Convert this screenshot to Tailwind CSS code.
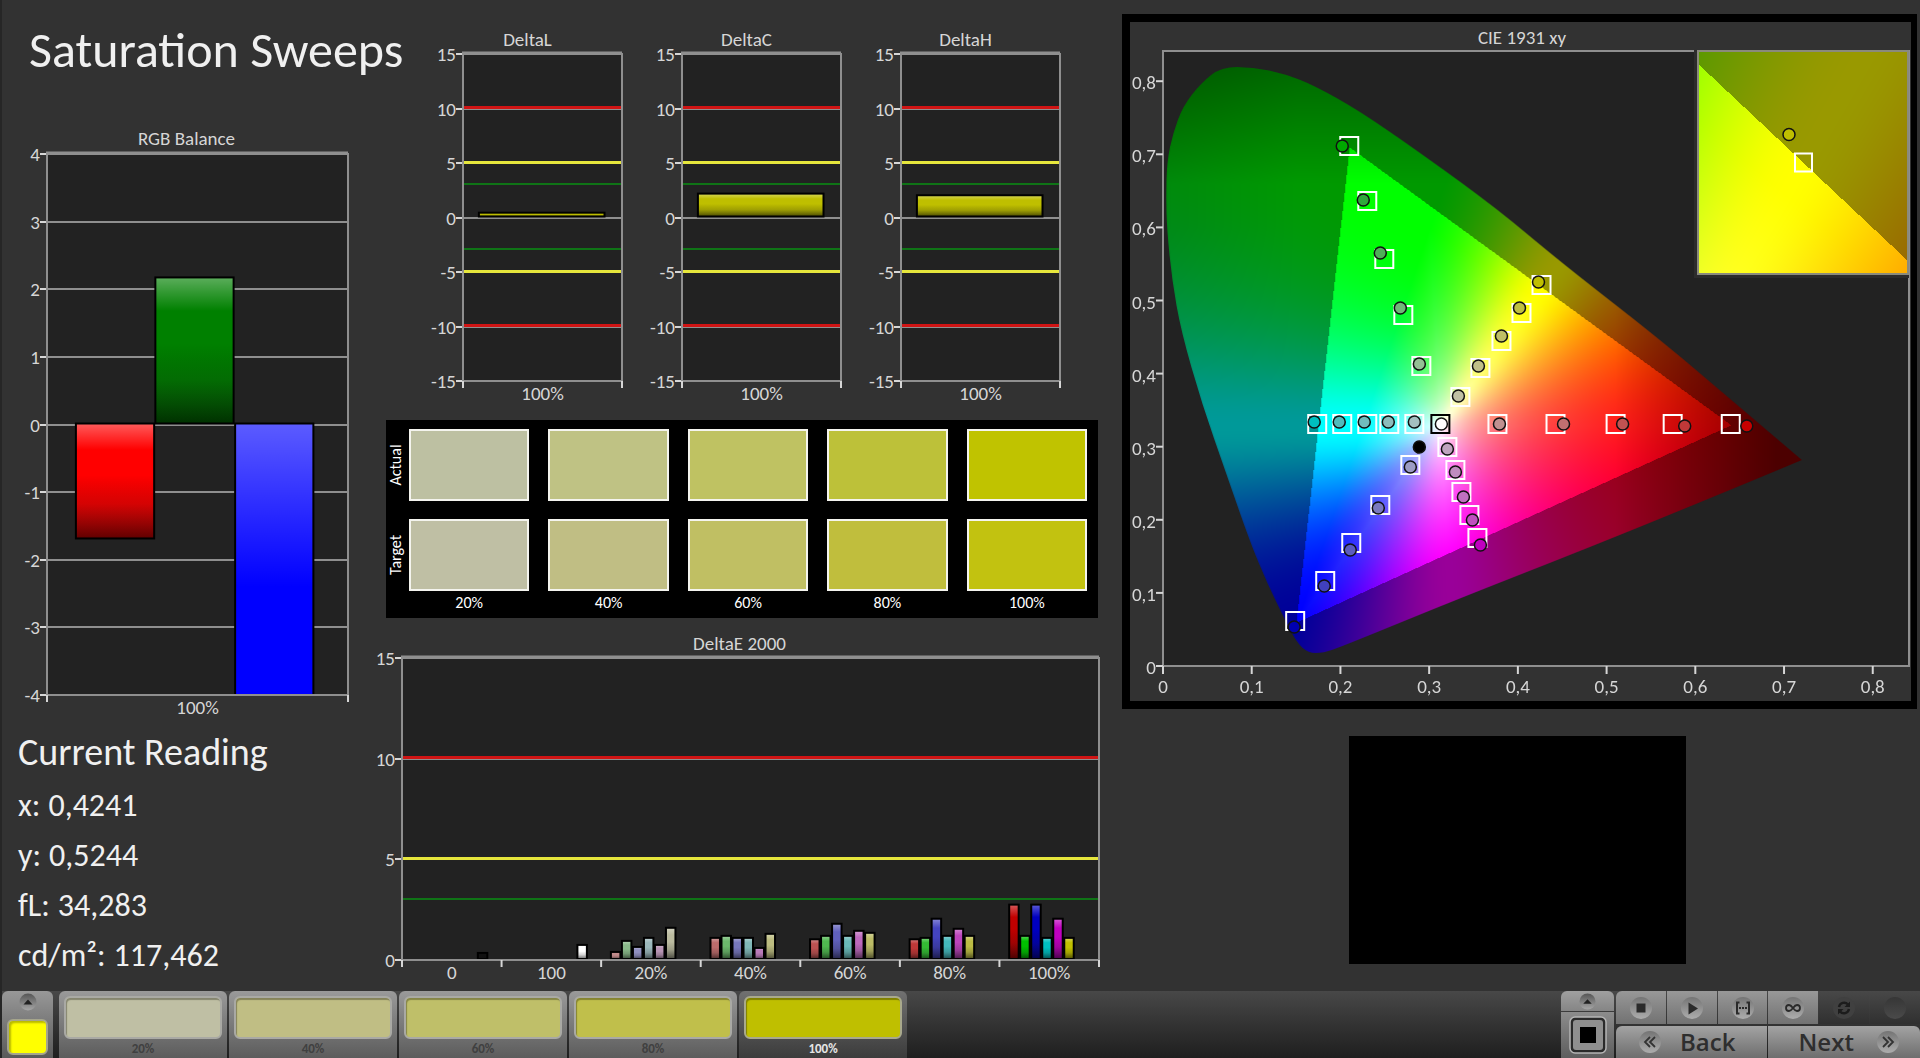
<!DOCTYPE html>
<html lang="en">
<head>
  <meta charset="UTF-8" />
  <meta name="viewport" content="width=device-width, initial-scale=1" />
  <title>Saturation Sweeps</title>
  <script src="https://cdn.jsdelivr.net/npm/@tailwindcss/browser@4"></script>
</head>
<body class="min-h-screen flex flex-col bg-[#323232] border-l-2 border-[#262626] font-[Carlito,Lato,sans-serif] text-[#d6d6d6]">

  <main class="flex-1 grid grid-cols-[381fr_734fr_803fr]">

    <!-- Left column -->
    <section class="min-w-0 flex flex-col pr-[35px]">
      <h1 class="h-[130px] pl-[27px] pt-[18px] text-[50px] leading-[64px] text-[#f0f0f0] whitespace-nowrap">Saturation Sweeps</h1>
      <figure class="pl-[45px]">
        <figcaption class="pr-[22px] pb-[2px] text-center text-[19px] leading-[18px]">RGB Balance</figcaption>
        <svg id="rgb" class="mt-1 w-full h-[541px] overflow-visible text-[19px]"></svg>
      </figure>
      <div class="pl-4 pt-8 text-[#f0f0f0]">
        <h2 class="text-[38px] leading-[50px]">Current Reading</h2>
        <dl class="pt-1 text-[32px] leading-[50px]">
          <div class="flex gap-2"><dt>x:</dt><dd>0,4241</dd></div>
          <div class="flex gap-2"><dt>y:</dt><dd>0,5244</dd></div>
          <div class="flex gap-2"><dt>fL:</dt><dd>34,283</dd></div>
          <div class="flex gap-2"><dt>cd/m²:</dt><dd>117,462</dd></div>
        </dl>
      </div>
    </section>

    <!-- Middle column -->
    <section class="min-w-0 flex flex-col pt-[30px]">
      <div class="grid grid-cols-3 pl-[23px] pr-[54px] pb-[39px] text-[19px]">
        <figure class="pl-[57px] pr-[3px]">
          <figcaption class="pr-[30px] text-center leading-5">DeltaL</figcaption>
          <svg id="deltaL" class="mt-1 w-full h-[327px] overflow-visible"></svg>
        </figure>
        <figure class="pl-[57px] pr-[3px]">
          <figcaption class="pr-[30px] text-center leading-5">DeltaC</figcaption>
          <svg id="deltaC" class="mt-1 w-full h-[327px] overflow-visible"></svg>
        </figure>
        <figure class="pl-[57px] pr-[3px]">
          <figcaption class="pr-[30px] text-center leading-5">DeltaH</figcaption>
          <svg id="deltaH" class="mt-1 w-full h-[327px] overflow-visible"></svg>
        </figure>
      </div>

      <div class="ml-[3px] mr-[19px] h-[198px] bg-black pt-[9px] pr-[11px] text-white grid grid-cols-[23px_1fr] grid-rows-[72px_72px_28px] gap-y-[18px]">
        <div class="flex items-center justify-center pr-[3px]"><span class="-rotate-90 text-[16px] leading-5">Actual</span></div>
        <div class="grid grid-cols-5 gap-x-[19px]">
          <div class="border-2 border-[#f4f4ee] bg-[#bdc0a2]"></div>
          <div class="border-2 border-[#f4f4ee] bg-[#bfc284]"></div>
          <div class="border-2 border-[#f4f4ee] bg-[#bfc262]"></div>
          <div class="border-2 border-[#f4f4ee] bg-[#bdc139]"></div>
          <div class="border-2 border-[#f4f4ee] bg-[#c0c300]"></div>
        </div>
        <div class="flex items-center justify-center pr-[3px]"><span class="-rotate-90 text-[16px] leading-5">Target</span></div>
        <div class="grid grid-cols-5 gap-x-[19px]">
          <div class="border-2 border-[#f4f4ee] bg-[#bfbfa4]"></div>
          <div class="border-2 border-[#f4f4ee] bg-[#c0be84]"></div>
          <div class="border-2 border-[#f4f4ee] bg-[#c0bf63]"></div>
          <div class="border-2 border-[#f4f4ee] bg-[#c0be3d]"></div>
          <div class="border-2 border-[#f4f4ee] bg-[#c2c210]"></div>
        </div>
        <div class="col-start-2 -mt-4 grid grid-cols-5 gap-x-[19px] text-center text-[16px] leading-5">
          <span>20%</span><span>40%</span><span>60%</span><span>80%</span><span>100%</span>
        </div>
      </div>

      <figure class="mt-4 pl-[19px] pr-[18px] text-[19px]">
        <figcaption class="pr-[22px] text-center leading-5">DeltaE 2000</figcaption>
        <svg id="deltaE" class="mt-1 w-full h-[302px] overflow-visible"></svg>
      </figure>
    </section>

    <!-- Right column -->
    <section class="min-w-0 flex flex-col pt-[14px] pl-[5px] pr-[3px]">
      <figure class="border-8 border-r-[6px] border-black h-[695px] pt-[6px] pl-[33px] pr-[2px]">
        <figcaption class="pr-7 pb-[3px] text-center text-[19px] leading-5">CIE 1931 xy</figcaption>
        <div class="relative h-[615px] bg-[#222222]">
          <canvas id="gamut" width="745" height="615" class="absolute inset-0 w-full h-full"></canvas>
          <svg id="cie" class="absolute inset-0 w-full h-full overflow-visible text-[19px]"></svg>
          <div class="absolute -top-px right-0 w-[215px] h-[228px] bg-[#2c2c2c] pl-[3px] pb-[3px]">
            <div class="relative w-full h-full border-2 border-[#8a8a7c]">
              <canvas id="inset" width="208" height="221" class="block w-full h-full"></canvas>
              <svg id="insetMarks" class="absolute inset-0 w-full h-full"></svg>
            </div>
          </div>
        </div>
      </figure>
      <div class="mt-[27px] flex justify-center pr-[5px]">
        <div class="w-[337px] h-[228px] bg-black"></div>
      </div>
    </section>
  </main>

  <!-- Bottom bar -->
  <footer class="h-[67px] flex items-stretch bg-linear-to-b from-[#484848] to-[#1f1f1f]">
    <button aria-label="Show patch" class="w-[51px] mr-[6px] pt-[2px] flex flex-col items-center rounded-t-md bg-linear-to-b from-[#989898] to-[#5a5a5a]">
      <svg viewBox="0 0 18 18" class="size-[18px]"><circle cx="9" cy="9" r="8.5" fill="url(#knob)"/><path d="M4.500 11.500 9 6.500l4.500 5z" fill="#222"/></svg>
      <span class="mt-[8px] w-[41px] h-[36px] rounded-md border-2 border-[#a5a58c] bg-[#ffff00] shadow-[inset_2px_2px_2px_#b9b900]"></span>
    </button>
    <div class="flex gap-[2px] text-[13px] font-bold text-[#404040]">
      <button class="w-[168px] px-[5px] pt-[5px] rounded-t-md bg-linear-to-b from-[#9a9a9a] to-[#5c5c5c]">
        <span class="block h-[43px] rounded-md border-2 border-[#a9a9a4] bg-[#bfbfa4] shadow-[inset_1px_2px_1px_#85856f]"></span>
        <span class="block leading-[19px]">20%</span>
      </button>
      <button class="w-[168px] px-[5px] pt-[5px] rounded-t-md bg-linear-to-b from-[#9a9a9a] to-[#5c5c5c]">
        <span class="block h-[43px] rounded-md border-2 border-[#a9a9a4] bg-[#c0be84] shadow-[inset_1px_2px_1px_#85835a]"></span>
        <span class="block leading-[19px]">40%</span>
      </button>
      <button class="w-[168px] px-[5px] pt-[5px] rounded-t-md bg-linear-to-b from-[#9a9a9a] to-[#5c5c5c]">
        <span class="block h-[43px] rounded-md border-2 border-[#a9a9a4] bg-[#bfbf69] shadow-[inset_1px_2px_1px_#858548]"></span>
        <span class="block leading-[19px]">60%</span>
      </button>
      <button class="w-[168px] px-[5px] pt-[5px] rounded-t-md bg-linear-to-b from-[#9a9a9a] to-[#5c5c5c]">
        <span class="block h-[43px] rounded-md border-2 border-[#a9a9a4] bg-[#c0bf4b] shadow-[inset_1px_2px_1px_#858432]"></span>
        <span class="block leading-[19px]">80%</span>
      </button>
      <button class="w-[168px] px-[5px] pt-[5px] rounded-t-md bg-linear-to-b from-[#717171] to-[#3c3c3c] text-[#e6e6e6]">
        <span class="block h-[43px] rounded-md border-2 border-[#a9a98c] bg-[#bfbf00] shadow-[inset_1px_2px_1px_#808000]"></span>
        <span class="block leading-[19px]">100%</span>
      </button>
    </div>

    <div class="ml-auto flex gap-[2px] text-[#2e2e2e]">
      <div class="w-[53px] flex flex-col gap-px">
        <button aria-label="Expand" class="h-5 flex items-center justify-center rounded-t-md bg-linear-to-b from-[#a0a0a0] to-[#858585]">
          <svg viewBox="0 0 18 18" class="size-[17px]"><circle cx="9" cy="9" r="8.500" fill="url(#knob)"/><path d="M4.500 11.500 9 6.500l4.500 5z" fill="#222"/></svg>
        </button>
        <button aria-label="Pattern" class="flex-1 flex items-center justify-center bg-linear-to-b from-[#8c8c8c] to-[#5e5e5e]">
          <svg viewBox="0 0 38 38" class="size-[38px]"><rect x="1" y="1" width="36" height="36" rx="5" fill="#2a2a2a" stroke="#b5b5b5" stroke-width="1.500"/><rect x="4" y="4" width="30" height="30" rx="3" fill="#8f8f8f"/><rect x="11" y="11" width="16" height="16" fill="#000"/></svg>
        </button>
      </div>
      <div class="w-[304px] grid grid-cols-6 grid-rows-[33px_32px] gap-x-px gap-y-[2px]">
        <button aria-label="Stop" class="flex items-center justify-center rounded-tl-md bg-linear-to-b from-[#989898] to-[#727272]">
          <svg viewBox="0 0 24 24" class="size-6"><circle cx="12" cy="12" r="11" fill="url(#knobLight)"/><path d="M7.500 7.500h9v9h-9z" fill="#2a2a2a"/></svg>
        </button>
        <button aria-label="Play" class="flex items-center justify-center bg-linear-to-b from-[#989898] to-[#727272]">
          <svg viewBox="0 0 24 24" class="size-6"><circle cx="12" cy="12" r="11" fill="url(#knobLight)"/><path d="M8.500 6.500 18 12.500l-9.500 6z" fill="#2a2a2a"/></svg>
        </button>
        <button aria-label="Range" class="flex items-center justify-center bg-linear-to-b from-[#989898] to-[#727272]">
          <svg viewBox="0 0 24 24" class="size-6"><circle cx="12" cy="12" r="11" fill="url(#knobLight)"/><path d="M8.500 6.500H6v11h2.500M15.500 6.500H18v11h-2.500" fill="none" stroke="#2a2a2a" stroke-width="2"/><path d="M8 12h8" stroke="#2a2a2a" stroke-width="2" stroke-dasharray="2 1"/></svg>
        </button>
        <button aria-label="Loop" class="flex items-center justify-center bg-linear-to-b from-[#989898] to-[#727272]">
          <svg viewBox="0 0 24 24" class="size-6"><circle cx="12" cy="12" r="11" fill="url(#knobLight)"/><path d="M12 12c-1.500-2-2.500-3-4-3a3 3 0 0 0 0 6c1.500 0 2.500-1 4-3s2.500-3 4-3a3 3 0 0 1 0 6c-1.500 0-2.500-1-4-3z" fill="none" stroke="#2a2a2a" stroke-width="1.800"/></svg>
        </button>
        <button aria-label="Refresh" disabled class="flex items-center justify-center bg-linear-to-b from-[#484848] to-[#303030]">
          <svg viewBox="0 0 24 24" class="size-6"><circle cx="12" cy="12" r="11" fill="#404040"/><path d="M7 11a5.200 5.200 0 0 1 9-2.500M17 13a5.200 5.200 0 0 1-9 2.500" fill="none" stroke="#1c1c1c" stroke-width="2.400"/><path d="M18 5.500v5.500h-5.500zM6 18.500V13h5.500z" fill="#1c1c1c"/></svg>
        </button>
        <button aria-label="Record" disabled class="flex items-center justify-center rounded-tr-md bg-linear-to-b from-[#484848] to-[#303030]">
          <svg viewBox="0 0 24 24" class="size-6"><circle cx="12" cy="12" r="11" fill="url(#knobDark)"/></svg>
        </button>
        <button class="col-span-3 flex items-center justify-center gap-[18px] rounded-tl-md bg-linear-to-b from-[#a3a3a3] to-[#6e6e6e] pr-[10px] font-['Open_Sans',sans-serif] text-[24px] leading-8 font-semibold">
          <svg viewBox="0 0 24 24" class="size-6"><circle cx="12" cy="12" r="11" fill="url(#knobLight)"/><path d="m12 7-5 5 5 5M17 7l-5 5 5 5" fill="none" stroke="#333" stroke-width="1.800"/></svg>
          Back
        </button>
        <button class="col-span-3 flex items-center justify-center gap-[22px] rounded-tr-md bg-linear-to-b from-[#a3a3a3] to-[#6e6e6e] pl-[10px] font-['Open_Sans',sans-serif] text-[24px] leading-8 font-semibold">
          Next
          <svg viewBox="0 0 24 24" class="size-6"><circle cx="12" cy="12" r="11" fill="url(#knobLight)"/><path d="m7 7 5 5-5 5M12 7l5 5-5 5" fill="none" stroke="#333" stroke-width="1.800"/></svg>
        </button>
      </div>
    </div>
  </footer>

  <!-- Shared gradients -->
  <svg width="0" height="0" class="absolute">
    <defs>
      <linearGradient id="gloss" x1="0" y1="0" x2="0" y2="1">
        <stop offset="0" stop-color="#fff" stop-opacity=".36"/>
        <stop offset=".1" stop-color="#fff" stop-opacity=".2"/>
        <stop offset=".23" stop-color="#fff" stop-opacity="0"/>
        <stop offset=".45" stop-color="#000" stop-opacity="0"/>
        <stop offset=".7" stop-color="#111" stop-opacity=".18"/>
        <stop offset="1" stop-color="#000" stop-opacity=".62"/>
      </linearGradient>
      <linearGradient id="knob" x1="0" y1="0" x2="0" y2="1">
        <stop offset="0" stop-color="#555"/><stop offset="1" stop-color="#a6a6a6"/>
      </linearGradient>
      <linearGradient id="knobLight" x1="0" y1="0" x2="0" y2="1">
        <stop offset="0" stop-color="#747474"/><stop offset="1" stop-color="#adadad"/>
      </linearGradient>
      <linearGradient id="knobDark" x1="0" y1="0" x2="0" y2="1">
        <stop offset="0" stop-color="#363636"/><stop offset="1" stop-color="#4a4a4a"/>
      </linearGradient>
    </defs>
  </svg>

  <script>
    const AXIS = '#8f8f8f';
    const TEXT = '#d6d6d6';

    // Bar chart in percent units, so it follows the width of its box
    function barChart(id, { min, max, step, limits, cats, bars }) {
      const y = v => (max - v) / (max - min) * 100 + '%';
      let s = '<rect width="100%" height="100%" fill="#222"/><g shape-rendering="crispEdges">';
      for (let v = min; v <= max; v += step) {
        s += `<line x1="0" x2="100%" y1="${y(v)}" y2="${y(v)}" stroke="${AXIS}" stroke-width="2"/>`;
        s += `<line x1="-7" x2="0" y1="${y(v)}" y2="${y(v)}" stroke="${TEXT}" stroke-width="2"/>`;
        s += `<text x="-7" y="${y(v)}" dy="7" text-anchor="end" fill="${TEXT}">${v}</text>`;
      }
      for (const [v, color, w] of limits) {
        s += `<line x1="0" x2="100%" y1="${y(v)}" y2="${y(v)}" stroke="${color}" stroke-width="${w}" transform="translate(0 -1)"/>`;
      }
      s += '</g><svg width="100%" height="100%">';
      for (const [x, w, v, color] of bars) {
        const top = y(Math.max(v, 0));
        const h = Math.abs(v) / (max - min) * 100 + '%';
        s += `<g transform="translate(0 -1)"><rect x="${x}%" y="${top}" width="${w}%" height="${h}" fill="${color}"/>`;
        s += `<rect x="${x}%" y="${top}" width="${w}%" height="${h}" fill="url(#gloss)" stroke="#000" stroke-width="2"/></g>`;
      }
      s += '</svg>';
      s += `<rect width="100%" height="100%" fill="none" stroke="${AXIS}" stroke-width="2"/>`;
      s += `<line x1="-1" x2="100%" y1="-1" y2="-1" stroke="${AXIS}" stroke-width="3"/>`;
      cats.forEach((c, i) => {
        s += `<text x="${(i + .5) / cats.length * 100}%" y="100%" dy="19" text-anchor="middle" fill="${TEXT}">${c}</text>`;
      });
      for (let i = 0; i <= cats.length; i++) {
        const x = i / cats.length * 100 + '%';
        s += `<svg x="${x}" y="100%" overflow="visible"><path d="M0 0v7" stroke="${TEXT}" stroke-width="2"/></svg>`;
      }
      document.getElementById(id).innerHTML = s;
    }

    barChart('rgb', {
      min: -4, max: 4, step: 1, limits: [], cats: ['100%'],
      bars: [[9.6, 26, -1.7, '#ff0000'], [36, 26, 2.16, '#008000'], [62.5, 26, -10.5, '#0000ff']]
    });

    const limits = [[10, '#d01414', 3], [5, '#e6e63c', 3], [3, '#0f7416', 2]];
    const both = limits.concat(limits.map(([v, c, w]) => [-v, c, w]));
    const delta = v => ({ min: -15, max: 15, step: 5, limits: both, cats: ['100%'], bars: [[10, 79, v, '#bfbf00']] });
    barChart('deltaL', delta(.35));
    barChart('deltaC', delta(2.1));
    barChart('deltaH', delta(1.95));

    // DeltaE groups: [slot, value, colour]
    const groups = [
      [[6, .3, '#111111']],
      [[6, .7, '#ffffff']],
      [[0, .35, '#c08a8a'], [1, .9, '#88b888'], [2, .6, '#8f8fc0'], [3, 1.05, '#9cb8bc'], [4, .7, '#b895b4'], [5, 1.55, '#bcbca0']],
      [[0, 1.05, '#bb6c6c'], [1, 1.15, '#6cb86c'], [2, 1.05, '#7676bb'], [3, 1.05, '#80b8b8'], [4, .55, '#b97ab9'], [5, 1.25, '#bcbc80']],
      [[0, .98, '#bc5252'], [1, 1.15, '#50b850'], [2, 1.75, '#6060bc'], [3, 1.15, '#68b8b8'], [4, 1.4, '#bc68bc'], [5, 1.3, '#bcbc66']],
      [[0, .98, '#bf3838'], [1, 1.05, '#34bb34'], [2, 2, '#4444bf'], [3, 1.15, '#44b8bc'], [4, 1.5, '#bc44bc'], [5, 1.15, '#bcbc44']],
      [[0, 2.7, '#c00000'], [1, 1.15, '#00c000'], [2, 2.7, '#0000c0'], [3, 1.05, '#00bfc0'], [4, 2, '#c000c0'], [5, 1.05, '#c0c000']]
    ];
    barChart('deltaE', {
      min: 0, max: 15, step: 5, limits,
      cats: ['0', '100', '20%', '40%', '60%', '80%', '100%'],
      bars: groups.flatMap((g, i) => g.map(([n, v, c]) => [i * 14.286 + 1.4 + n * 1.58, 1.36, v, c]))
    });

    // Chromaticity diagram
    const PX = 886, PY = 731;            // pixels per unit of x and y
    const PRIM = [[.21, .71], [.64, .33], [.15, .06]];
    const ramp = (v, a, b) => Math.min(1, Math.max(0, (v - a) / (b - a)));

    function inTriangle(x, y) {
      const side = (a, b) => (b[0] - a[0]) * (y - a[1]) - (b[1] - a[1]) * (x - a[0]);
      const [g, r, b] = PRIM;
      return side(g, r) <= 0 && side(r, b) <= 0 && side(b, g) <= 0;
    }

    function colorAt(x, y) {
      y = Math.max(y, .001);
      const X = x / y, Z = (1 - x - y) / y;
      const rgb = [3.2406 * X - 1.5372 - .4986 * Z, -.9689 * X + 1.8758 + .0415 * Z, .0557 * X - .204 + 1.057 * Z];
      const max = Math.max(...rgb);
      const c = rgb.map(v => Math.max(0, v / max));
      const lo = Math.min(...c);
      let k = 1 - .5 * ramp(x, .51, .69) - .32 * ramp(y, .66, .82) - .1 * ramp(.3 - x, .15, .3) * ramp(y, .35, .6);
      if (!inTriangle(x, y)) k *= .6;
      // the lowest channel stays linear, the middle one gets an S curve (brighter on the warm side)
      return c.map(v => {
        const t = (v - lo) / (1 - lo + 1e-6);
        const cold = t * t * (3 - 2 * t);
        const warm = (cold + Math.sin(t * Math.PI / 2)) / 2;
        return 255 * k * (lo + (1 - lo) * (c[0] === lo ? cold : warm));
      });
    }

    function paint(ctx, w, h, x0, y0, dx, dy) {
      const img = ctx.createImageData(w, h);
      for (let j = 0; j < h; j++) {
        for (let i = 0; i < w; i++) {
          const [r, g, b] = colorAt(x0 + i * dx, y0 - j * dy);
          const p = (j * w + i) * 4;
          img.data[p] = r; img.data[p + 1] = g; img.data[p + 2] = b; img.data[p + 3] = 255;
        }
      }
      ctx.putImageData(img, 0, 0);
    }

    const locus = [
      [638, 409], [564, 346], [497, 289], [397, 211], [334, 158], [260, 104], [195, 59], [150, 34], [122, 23], [90, 16],
      [58, 16], [38, 32], [20, 55], [10, 82], [4, 110], [3, 146], [4, 179], [9, 229], [18, 280], [39, 353], [63, 422],
      [87, 491], [104, 532], [122, 569], [134, 592], [145, 602], [160, 602], [180, 595], [297, 547], [427, 496], [564, 440]
    ];
    const gctx = document.getElementById('gamut').getContext('2d');
    paint(gctx, 745, 615, 0, 615 / PY, 1 / PX, 1 / PY);
    gctx.globalCompositeOperation = 'destination-in';
    gctx.beginPath();
    gctx.moveTo(...locus[0]);
    for (let i = 1; i < locus.length; i++) {
      const [ax, ay] = locus[i], [bx, by] = locus[(i + 1) % locus.length];
      if (i === locus.length - 1) gctx.quadraticCurveTo(ax, ay, bx, by);
      else gctx.quadraticCurveTo(ax, ay, (ax + bx) / 2, (ay + by) / 2);
    }
    gctx.fill();

    paint(document.getElementById('inset').getContext('2d'), 208, 221, .3822, .563, .09 / 208, .09 / 221);

    const at = (x, y, body) => `<svg x="${x / 7.45}%" y="${y / 6.15}%" overflow="visible">${body}</svg>`;
    const square = c => `<rect x="-9" y="-9" width="18" height="18" fill="none" stroke="${c}" stroke-width="2"/>`;
    const dot = c => `<circle r="6" fill="${c}" stroke="#111" stroke-width="1.500"/>`;

    // Sweeps: [target x, target y, measured x, measured y, measured colour]
    const marks = [
      [186, 95, 179, 95, '#00a800'], [204, 150, 200, 149, '#2fa83a'], [221, 208, 217, 202, '#4fae58'], [240, 264, 237, 257, '#70b878'], [258, 315, 256, 313, '#94bf94'],
      [378, 234, 375, 231, '#bfbf00'], [358, 262, 356, 257, '#bfbf40'], [338, 290, 338, 285, '#bfbf66'], [317, 317, 315, 315, '#c0c088'], [297, 346, 295, 345, '#c0c0a4'],
      [154, 373, 151, 371, '#00bfbf'], [179, 373, 176, 371, '#50bcbc'], [204, 373, 201, 371, '#70bcbc'], [226, 373, 225, 371, '#8cbcbc'], [251, 373, 251, 371, '#a4c0c0'],
      [334, 373, 336, 373, '#c09090'], [392, 373, 400, 373, '#c07070'], [452, 373, 459, 373, '#c05252'], [509, 373, 521, 375, '#c03838'], [567, 373, 583, 375, '#c80000'],
      [247, 414, 247, 416, '#9c9cc4'], [217, 454, 215, 457, '#7a7abf'], [188, 492, 187, 499, '#5c5cbf'], [162, 530, 161, 535, '#4040bf'], [132, 570, 131, 576, '#0000b0'],
      [284, 396, 284, 398, '#bfa4bf'], [292, 419, 292, 421, '#bf8cbf'], [298, 441, 300, 446, '#bf70bf'], [306, 464, 309, 469, '#bf50bf'], [314, 487, 317, 494, '#c000c0']
    ];
    let s = `<rect width="100%" height="100%" fill="none" stroke="${AXIS}" stroke-width="2"/>`;
    for (let i = 0; i <= 8; i++) {
      const label = i ? '0,' + i : '0';
      s += at(i * 88.6, 615, `<path d="M0 0v8" stroke="${TEXT}" stroke-width="2"/><text y="27" text-anchor="middle" fill="${TEXT}">${label}</text>`);
      s += at(0, 615 - i * 73.1, `<path d="M0 0h-7" stroke="${TEXT}" stroke-width="2"/><text x="-7" y="8" text-anchor="end" fill="${TEXT}">${label}</text>`);
    }
    for (const [tx, ty, mx, my, c] of marks) s += at(tx, ty, square('#fff')) + at(mx, my, dot(c));
    s += at(277, 373, square('#000')) + at(278, 373, dot('#fff')) + at(256, 396, dot('#000'));
    document.getElementById('cie').innerHTML = s;

    document.getElementById('insetMarks').innerHTML =
      `<svg x="50%" y="50%" overflow="visible"><rect x="-8" y="-9" width="17" height="18" fill="none" stroke="#fff" stroke-width="2"/>` +
      `<circle cx="-14" cy="-28" r="6" fill="#bfbf00" stroke="#111" stroke-width="1.500"/></svg>`;
  </script>
</body>
</html>
